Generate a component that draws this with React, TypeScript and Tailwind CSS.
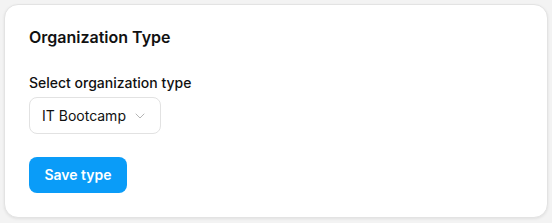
import { ChevronDown } from "lucide-react";

export default function App() {
  return (
    <div
      className="min-h-[223px] w-full bg-[#f3f3f3] p-1"
      style={{ fontFamily: "Inter, 'Noto Sans', sans-serif" }}
    >
      <div className="rounded-[14px] border border-[#e3e3e3] bg-white px-6 pb-6 pt-5 shadow-[0_1px_3px_rgba(0,0,0,0.08)]">
        <h2 className="text-base font-semibold leading-6 text-[#111]">
          Organization Type
        </h2>
        <div className="mt-6 flex flex-col gap-1">
          <label className="text-sm font-medium leading-5 text-[#111]">
            Select organization type
          </label>
          <button className="flex h-[37px] w-[132px] items-center justify-between rounded-lg border border-[#e2e2e2] bg-white pl-3 pr-3 text-sm text-[#111]">
            <span>IT Bootcamp</span>
            <ChevronDown className="h-4 w-4 text-[#b5b5b5]" strokeWidth={1.5} />
          </button>
        </div>
        <button className="mt-[23px] h-9 w-[98px] rounded-lg bg-[#0a9cf8] text-sm font-semibold text-white">
          Save type
        </button>
      </div>
    </div>
  );
}
